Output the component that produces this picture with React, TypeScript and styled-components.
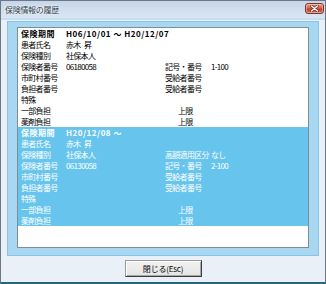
import React from 'react';
import styled, { createGlobalStyle } from 'styled-components';

const GlobalStyle = createGlobalStyle`
  html, body { margin: 0; padding: 0; background: #ffffff; }
  body { font-family: "Noto Sans CJK JP", "Liberation Sans", sans-serif; }
`;

const Window = styled.div`
  width: 326px;
  height: 284px;
  box-sizing: border-box;
  display: flex;
  flex-direction: column;
  background: #e9f0f7;
  border: 1px solid #6c7884;
  border-bottom: 2px solid #2a6482;
`;

const TitleBar = styled.div`
  height: 17px;
  flex: none;
  display: flex;
  align-items: flex-start;
  justify-content: space-between;
  background: linear-gradient(#c6d6e9, #dbe6f3);
  border-bottom: 2px solid #c4def3;
`;

const Title = styled.span`
  padding-left: 4px;
  font-size: 8px;
  letter-spacing: -0.3px;
  line-height: 17px;
  color: #2b3a4c;
  text-shadow: 0 0 3px #ffffff, 0 0 2px #ffffff;
`;

const CloseButton = styled.div`
  width: 19px;
  height: 11px;
  box-sizing: border-box;
  margin: 2px 1px 0 0;
  display: flex;
  align-items: center;
  justify-content: center;
  border: 1px solid #823428;
  border-radius: 3px;
  background: linear-gradient(#e6a392, #cf6550 45%, #b9412c 55%, #cf7562);
  box-shadow: inset 0 0 0 1px rgba(255, 220, 210, 0.45);
`;

const Body = styled.div`
  flex: 1;
  display: flex;
  flex-direction: column;
  padding: 1px 6px 0;
`;

const Panel = styled.div`
  background: #a8d8f1;
  border: 1px solid #8cc2e3;
  padding: 5px 9px 7px;
`;

const List = styled.div`
  height: 219px;
  background: #ffffff;
  border: 1px solid #7f8d99;
  overflow: hidden;
`;

const Record = styled.div<{ $selected?: boolean }>`
  background: ${(p) => (p.$selected ? '#67c4ec' : 'transparent')};
  color: ${(p) => (p.$selected ? '#ffffff' : '#000000')};
`;

const Row = styled.div`
  display: grid;
  grid-template-columns: 45px 99px 46px 1fr;
  height: 11px;
  padding-left: 3px;
  font-size: 8px;
  line-height: 11px;
  white-space: nowrap;
`;

const Cell = styled.span<{ $bold?: boolean; $indent?: boolean; $span?: boolean }>`
  font-weight: ${(p) => (p.$bold ? 700 : 400)};
  padding-left: ${(p) => (p.$indent ? '13px' : '0')};
  letter-spacing: ${(p) => (p.$bold ? '0.5px' : '-0.7px')};
  grid-column: ${(p) => (p.$span ? 'span 3' : 'auto')};
  overflow: visible;
`;

const Footer = styled.div`
  flex: 1;
  display: flex;
  justify-content: center;
  align-items: flex-start;
  padding-top: 4px;
`;

const Button = styled.button`
  width: 77px;
  height: 17px;
  box-sizing: border-box;
  padding: 0;
  font-family: "Noto Sans CJK JP", "Liberation Sans", sans-serif;
  font-size: 8px;
  letter-spacing: -0.2px;
  color: #000000;
  background: linear-gradient(#f2f2f2, #e4e4e4);
  border: 1px solid;
  border-color: #9a9a9a #3c3c3c #3c3c3c #9a9a9a;
  box-shadow: inset 1px 1px 0 #ffffff, inset -1px -1px 0 #a8a8a8;
  border-radius: 0;
`;

type Item = {
  label: string;
  value?: string;
  rlabel?: string;
  rvalue?: string;
  indent?: boolean;
  head?: boolean;
};

const NAME = '赤木\u2002昇';

const recordA: Item[] = [
  { label: '保険期間', value: 'H06/10/01 ～ H20/12/07', head: true },
  { label: '患者氏名', value: NAME },
  { label: '保険種別', value: '社保本人' },
  { label: '保険者番号', value: '06180058', rlabel: '記号・番号', rvalue: '1-100' },
  { label: '市町村番号', rlabel: '受給者番号' },
  { label: '負担者番号', rlabel: '受給者番号' },
  { label: '特殊' },
  { label: '一部負担', rlabel: '上限', indent: true },
  { label: '薬剤負担', rlabel: '上限', indent: true },
];

const recordB: Item[] = [
  { label: '保険期間', value: 'H20/12/08 ～', head: true },
  { label: '患者氏名', value: NAME },
  { label: '保険種別', value: '社保本人', rlabel: '高額適用区分', rvalue: 'なし' },
  { label: '保険者番号', value: '06130058', rlabel: '記号・番号', rvalue: '2-100' },
  { label: '市町村番号', rlabel: '受給者番号' },
  { label: '負担者番号', rlabel: '受給者番号' },
  { label: '特殊' },
  { label: '一部負担', rlabel: '上限', indent: true },
  { label: '薬剤負担', rlabel: '上限', indent: true },
];

const RecordView = ({ items, selected }: { items: Item[]; selected?: boolean }) => (
  <Record $selected={selected}>
    {items.map((it, i) =>
      it.head ? (
        <Row key={i}>
          <Cell $bold>{it.label}</Cell>
          <Cell $bold $span>
            {it.value}
          </Cell>
        </Row>
      ) : (
        <Row key={i}>
          <Cell>{it.label}</Cell>
          <Cell>{it.value ?? ''}</Cell>
          <Cell $indent={it.indent}>{it.rlabel ?? ''}</Cell>
          <Cell>{it.rvalue ?? ''}</Cell>
        </Row>
      )
    )}
  </Record>
);

export default function App() {
  return (
    <>
      <GlobalStyle />
      <Window>
        <TitleBar>
          <Title>保険情報の履歴</Title>
          <CloseButton>
            <svg width="9" height="7" viewBox="0 0 9 7">
              <path d="M1.5 1 L7.5 6 M7.5 1 L1.5 6" stroke="#6b2219" strokeWidth="2.6" strokeLinecap="round" />
              <path d="M1.5 1 L7.5 6 M7.5 1 L1.5 6" stroke="#ffffff" strokeWidth="1.4" strokeLinecap="round" />
            </svg>
          </CloseButton>
        </TitleBar>
        <Body>
          <Panel>
            <List>
              <RecordView items={recordA} />
              <RecordView items={recordB} selected />
            </List>
          </Panel>
          <Footer>
            <Button>閉じる(Esc)</Button>
          </Footer>
        </Body>
      </Window>
    </>
  );
}
